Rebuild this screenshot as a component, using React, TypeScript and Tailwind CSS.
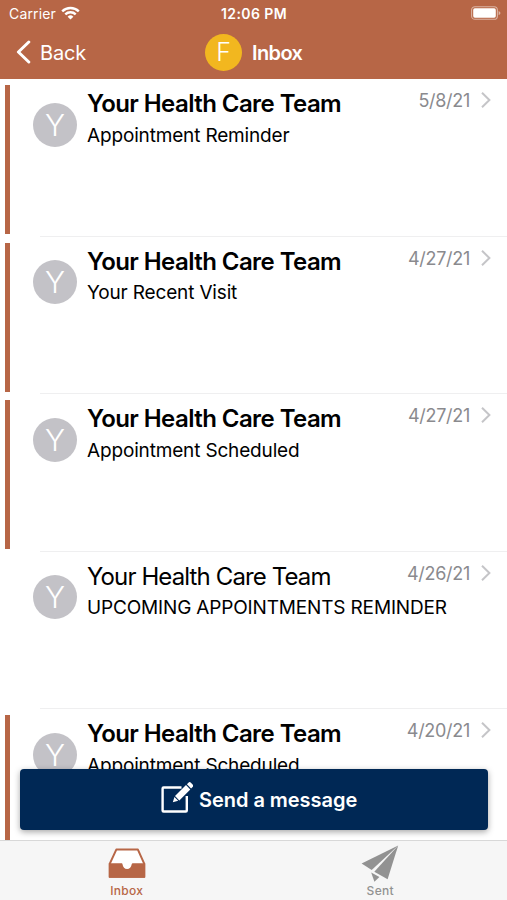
import clsx from 'clsx'

type Message = {
  id: number
  sender: string
  subject: string
  date: string
  unread: boolean
}

const MESSAGES: Message[] = [
  { id: 1, sender: 'Your Health Care Team', subject: 'Appointment Reminder', date: '5/8/21', unread: true },
  { id: 2, sender: 'Your Health Care Team', subject: 'Your Recent Visit', date: '4/27/21', unread: true },
  { id: 3, sender: 'Your Health Care Team', subject: 'Appointment Scheduled', date: '4/27/21', unread: true },
  { id: 4, sender: 'Your Health Care Team', subject: 'UPCOMING APPOINTMENTS REMINDER', date: '4/26/21', unread: false },
  { id: 5, sender: 'Your Health Care Team', subject: 'Appointment Scheduled', date: '4/20/21', unread: true },
]

export default function App() {
  return (
    <div className="relative flex h-[900px] w-[507px] flex-col overflow-hidden bg-white font-['Inter',sans-serif] text-black">
      <header className="h-[79px] shrink-0 bg-[#b76646] text-white">
        <StatusBar />
        <NavBar />
      </header>

      <main className="min-h-0 flex-1 overflow-hidden">
        {MESSAGES.map(m => (
          <MessageRow key={m.id} message={m} />
        ))}
      </main>

      {/* Floating compose button */}
      <button className="absolute top-[769px] left-5 flex h-[61px] w-[468px] items-center rounded-[4px] bg-[#002855] pl-[141px] text-white shadow-[0_2px_6px_rgba(0,0,0,0.35)]">
        <ComposeIcon />
        <span className="mt-px ml-[6px] text-[20px] leading-6 font-semibold tracking-[-0.04px] whitespace-nowrap">Send a message</span>
      </button>

      <TabBar />
    </div>
  )
}

function StatusBar() {
  return (
    <div className="grid h-[27px] grid-cols-[1fr_auto_1fr] items-center pr-[6px] pl-[9px]">
      <div className="flex items-center gap-[5px]">
        <span className="text-[14px] leading-4 tracking-[0.15px]">Carrier</span>
        <svg className="-mt-[2px]" width="19" height="14" viewBox="0 0 19 14" fill="none" stroke="white" strokeWidth="2.4">
          <path d="M1.2 5.3a12 12 0 0 1 16.6 0" />
          <path d="M4.3 8.4a7.4 7.4 0 0 1 10.4 0" />
          <path d="M9.5 13.6 6.6 10.7a4.1 4.1 0 0 1 5.8 0Z" fill="white" stroke="none" />
        </svg>
      </div>
      <span className="-ml-[2px] text-[14px] leading-4 font-semibold tracking-[0.4px] whitespace-nowrap">12:06 PM</span>
      <svg className="-mt-px justify-self-end" width="30" height="14" viewBox="0 0 30 14">
        <rect x="0.6" y="0.7" width="25.8" height="12.6" rx="3.4" fill="none" stroke="white" strokeOpacity="0.5" strokeWidth="1.1" />
        <rect x="2.2" y="2.3" width="22.6" height="9.4" rx="1.6" fill="white" />
        <path d="M27.6 4.9c2.4.8 2.4 3.4 0 4.2Z" fill="white" fillOpacity="0.5" />
      </svg>
    </div>
  )
}

function NavBar() {
  return (
    <div className="grid h-[50px] grid-cols-[205px_1fr] items-center">
      <button className="flex items-center pl-4">
        <svg width="15" height="24" viewBox="0 0 15 24" fill="none" stroke="white" strokeWidth="3" strokeLinecap="round" strokeLinejoin="round">
          <path d="M12.8 2 2.4 12l10.4 10" />
        </svg>
        <span className="mt-px ml-[9px] text-[20px] leading-6 tracking-[-0.2px]">Back</span>
      </button>
      <div className="flex items-center">
        <div className="flex size-[37px] items-center justify-center rounded-full bg-[#f2b71f] text-[25px] leading-none font-light">F</div>
        <span className="mt-px ml-[10px] text-[20px] leading-6 font-semibold tracking-[-0.6px]">Inbox</span>
      </div>
    </div>
  )
}

function MessageRow({ message }: { message: Message }) {
  return (
    <div className="flex h-[157.5px] pt-[6px]">
      <div className={clsx('ml-[4.5px] h-[149px] w-[5px] shrink-0', message.unread && 'bg-[#b76646]')} />
      <div className="ml-[30.5px] flex h-[151.5px] flex-1 border-b border-[#efeff0]">
        <div className="mt-[17.5px] -ml-[7px] flex size-[44px] shrink-0 items-center justify-center rounded-full bg-[#c3c2c7] text-[30px] leading-none font-light text-white">
          Y
        </div>
        <div className="ml-[10px] flex-1">
          <div className="flex h-[38.5px] items-start">
            <span className={clsx('mt-[4px] text-[24px] leading-[30px] whitespace-nowrap', message.unread ? 'font-semibold tracking-[-0.57px]' : 'tracking-[-0.88px]')}>
              {message.sender}
            </span>
            <span className="mt-[4px] ml-auto text-[18px] leading-6 tracking-[-0.3px] text-[#8a8a8e]">{message.date}</span>
            <svg className="mt-[6px] mr-[15px] ml-[10px]" width="12" height="18" viewBox="0 0 12 18" fill="none" stroke="#c5c5c8" strokeWidth="2">
              <path d="M2 1.8 9.4 9 2 16.2" />
            </svg>
          </div>
          <p className="text-[19px] leading-6 tracking-[-0.16px] whitespace-nowrap">{message.subject}</p>
        </div>
      </div>
    </div>
  )
}

function TabBar() {
  return (
    <nav className="grid h-[60px] shrink-0 grid-cols-2 border-t border-[#d8d8d8] bg-[#f6f6f6] text-[12px] font-medium">
      <div className="flex flex-col items-center text-[#b76646]">
        <svg className="mt-[7px]" width="38" height="31" viewBox="0 0 38 31">
          <path d="M8.3 1.6h21.6l6.3 14v13.2H1.8V15.6Z" fill="white" stroke="currentColor" strokeWidth="2" strokeLinejoin="round" />
          <path d="M.8 15.2h12.6c.7 0 1 .4 1.1 1 .5 3 2.1 4.7 4.6 4.7s4.1-1.7 4.6-4.7c.1-.6.5-1 1.1-1h12.4v14.6H.8Z" fill="currentColor" />
        </svg>
        <span className="mt-[4px] leading-4 tracking-[0.3px]">Inbox</span>
      </div>
      <div className="flex flex-col items-center text-[#929292]">
        <svg className="mt-[4px]" width="38" height="37" viewBox="0 0 38 37" fill="currentColor">
          <path d="M37.2.6.6 18.4l10.1 6.5Z" />
          <path d="M37.2.6 13.3 26.7l13.3 7.5Z" />
          <path d="m10.2 27.5 8.2 4.5-5 4.8Z" />
        </svg>
        <span className="mt-[1px] leading-4 tracking-[0.3px]">Sent</span>
      </div>
    </nav>
  )
}

function ComposeIcon() {
  return (
    <svg className="-mt-[4px]" width="32" height="34" viewBox="0 0 32 34" fill="none">
      <path d="M20.5 6.5H2.6c-.6 0-1 .4-1 1v22c0 .6.4 1 1 1h22.2c.6 0 1-.4 1-1V15" stroke="white" strokeWidth="2.4" />
      {/* pencil: tip, body, eraser */}
      <path d="m11.800 21.300 1.600-5.300 3.800 3.800Z" fill="white" />
      <path d="M14 15.100 25 4.100l4.300 4.300-11 11Z" fill="white" />
      <path d="m25.900 3.200 1.500-1.500c.8-.8 1.700-.8 2.500 0l1.700 1.700c.8.8.8 1.700 0 2.500l-1.500 1.500Z" fill="white" />
    </svg>
  )
}
